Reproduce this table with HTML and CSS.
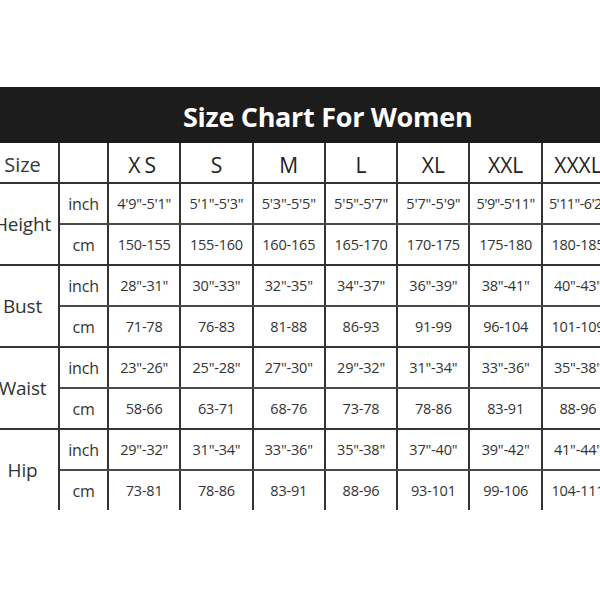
FILE: index.html
```html
<!DOCTYPE html>
<html>
<head>
<meta charset="utf-8">
<link rel="stylesheet" href="styles.css">
</head>
<body>
<div class="page">
  <div class="band"><h1 class="title">Size Chart For Women</h1></div>
  <div class="clip">
    <table class="chart">
      <colgroup>
        <col class="c-label"><col class="c-unit">
        <col class="c-data"><col class="c-data"><col class="c-data"><col class="c-data">
        <col class="c-data"><col class="c-data"><col class="c-data">
      </colgroup>
      <tr class="head">
        <th class="lab">Size</th><th></th>
        <th class="xs">XS</th><th>S</th><th>M</th><th>L</th><th>XL</th><th>XXL</th><th>XXXL</th>
      </tr>
      <tr class="top">
        <td class="lab" rowspan="2">Height</td><td class="unit">inch</td>
        <td>4'9"-5'1"</td><td>5'1"-5'3"</td><td>5'3"-5'5"</td><td>5'5"-5'7"</td><td>5'7"-5'9"</td><td class="tight">5'9"-5'11"</td><td class="tight">5'11"-6'2"</td>
      </tr>
      <tr class="bot">
        <td class="unit">cm</td>
        <td>150-155</td><td>155-160</td><td>160-165</td><td>165-170</td><td>170-175</td><td>175-180</td><td>180-185</td>
      </tr>
      <tr class="top">
        <td class="lab" rowspan="2">Bust</td><td class="unit">inch</td>
        <td>28"-31"</td><td>30"-33"</td><td>32"-35"</td><td>34"-37"</td><td>36"-39"</td><td>38"-41"</td><td>40"-43"</td>
      </tr>
      <tr class="bot">
        <td class="unit">cm</td>
        <td>71-78</td><td>76-83</td><td>81-88</td><td>86-93</td><td>91-99</td><td>96-104</td><td>101-109</td>
      </tr>
      <tr class="top">
        <td class="lab" rowspan="2">Waist</td><td class="unit">inch</td>
        <td>23"-26"</td><td>25"-28"</td><td>27"-30"</td><td>29"-32"</td><td>31"-34"</td><td>33"-36"</td><td>35"-38"</td>
      </tr>
      <tr class="bot">
        <td class="unit">cm</td>
        <td>58-66</td><td>63-71</td><td>68-76</td><td>73-78</td><td>78-86</td><td>83-91</td><td>88-96</td>
      </tr>
      <tr class="top">
        <td class="lab last" rowspan="2">Hip</td><td class="unit">inch</td>
        <td>29"-32"</td><td>31"-34"</td><td>33"-36"</td><td>35"-38"</td><td>37"-40"</td><td>39"-42"</td><td>41"-44"</td>
      </tr>
      <tr class="bot last">
        <td class="unit">cm</td>
        <td>73-81</td><td>78-86</td><td>83-91</td><td>88-96</td><td>93-101</td><td>99-106</td><td>104-111</td>
      </tr>
    </table>
  </div>
</div>
</body>
</html>
```
FILE: styles.css
```css
html, body {
  margin: 0;
  padding: 0;
  background: #ffffff;
}
.page {
  width: 600px;
  height: 600px;
  overflow: hidden;
  padding-top: 87px;
  box-sizing: border-box;
  font-family: "Open Sans", "Noto Sans", "Liberation Sans", sans-serif;
}
.band {
  height: 56px;
  background: #1c1c1c;
  display: flex;
  align-items: center;
  padding-left: 183px;
}
.title {
  margin: 0;
  color: #ffffff;
  font-size: 27px;
  font-weight: 700;
  letter-spacing: -0.3px;
  line-height: 1;
  padding-top: 2px;
}
.clip {
  width: 600px;
  overflow: hidden;
}
.chart {
  border-collapse: collapse;
  table-layout: fixed;
  margin-left: -15px;
  width: 628px;
  color: #333333;
}
.c-label { width: 73px; }
.c-unit { width: 49px; }
.c-data { width: 72.3px; }
.chart th, .chart td {
  height: 39px;
  padding: 0;
  text-align: center;
  vertical-align: middle;
  border: 2px solid #333333;
  white-space: nowrap;
  overflow: hidden;
}
.chart tr:first-child th {
  border-top: none;
  padding-top: 4px;
  height: 35px;
}
.chart th {
  font-weight: 400;
  font-size: 21px;
  color: #222222;
}
.chart th.xs { letter-spacing: 4px; }
.chart th.lab { font-size: 20px; color: #3a3a3a; }
.chart td {
  font-size: 14.5px;
  letter-spacing: -0.2px;
}
.chart td.tight { letter-spacing: -0.6px; }
.chart td.unit { font-size: 16px; }
.chart td.lab {
  font-size: 19px;
}
.chart tr.top td:not(.lab) { border-bottom-color: #4a4a4a; }
.chart tr.last td, .chart td.last { border-bottom: none; }
```
